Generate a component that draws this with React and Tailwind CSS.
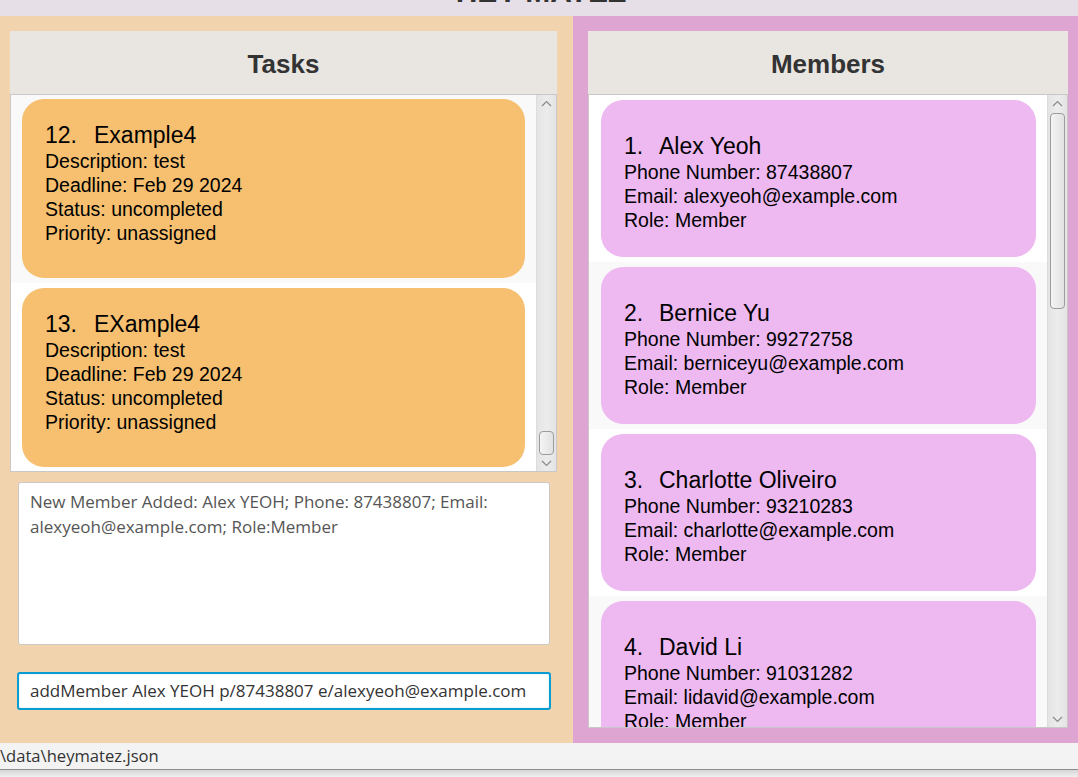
import React from 'react';

const tasks = [
  { id: 12, name: 'Example4', description: 'test', deadline: 'Feb 29 2024', status: 'uncompleted', priority: 'unassigned' },
  { id: 13, name: 'EXample4', description: 'test', deadline: 'Feb 29 2024', status: 'uncompleted', priority: 'unassigned' },
];

const members = [
  { id: 1, name: 'Alex Yeoh', phone: '87438807', email: 'alexyeoh@example.com', role: 'Member' },
  { id: 2, name: 'Bernice Yu', phone: '99272758', email: 'berniceyu@example.com', role: 'Member' },
  { id: 3, name: 'Charlotte Oliveiro', phone: '93210283', email: 'charlotte@example.com', role: 'Member' },
  { id: 4, name: 'David Li', phone: '91031282', email: 'lidavid@example.com', role: 'Member' },
];

function Chevron({ up }) {
  return (
    <svg width="11" height="7" viewBox="0 0 11 7" className="text-[#8a8a8a]">
      <path d={up ? 'M1 6 L5.5 1.5 L10 6' : 'M1 1 L5.5 5.5 L10 1'} fill="none" stroke="currentColor" strokeWidth="1.2" />
    </svg>
  );
}

function ScrollBar({ before, thumb }) {
  return (
    <div className="w-[20px] shrink-0 flex flex-col bg-gradient-to-r from-[#e4e4e4] via-[#ececec] to-[#e4e4e4] border-l border-[#dcdcdc]">
      <div className="h-[16px] flex items-center justify-center">
        <Chevron up />
      </div>
      <div style={{ height: before }} />
      <div
        className="mx-[2px] rounded-[4px] border border-[#9c9c9c] bg-gradient-to-r from-[#f4f4f4] to-[#e2e2e2]"
        style={{ height: thumb }}
      />
      <div className="flex-1" />
      <div className="h-[16px] flex items-center justify-center">
        <Chevron />
      </div>
    </div>
  );
}

function TaskCard({ task }) {
  return (
    <div className="h-[179px] rounded-[22px] bg-[#f6c070] pl-[23px] pt-[23px] text-black font-['Liberation_Sans',Arial,sans-serif]">
      <div className="flex text-[23px] leading-[27px]">
        <span className="w-[49px]">{task.id}.</span>
        <span>{task.name}</span>
      </div>
      <div className="text-[19.5px] leading-[24px]">
        <div>Description: {task.description}</div>
        <div>Deadline: {task.deadline}</div>
        <div>Status: {task.status}</div>
        <div>Priority: {task.priority}</div>
      </div>
    </div>
  );
}

function MemberCard({ member }) {
  return (
    <div className="h-[157px] rounded-[22px] bg-[#edb9f0] pl-[23px] pt-[33px] text-black font-['Liberation_Sans',Arial,sans-serif]">
      <div className="flex text-[23px] leading-[27px]">
        <span className="w-[35px]">{member.id}.</span>
        <span>{member.name}</span>
      </div>
      <div className="text-[19.5px] leading-[24px]">
        <div>Phone Number: {member.phone}</div>
        <div>Email: {member.email}</div>
        <div>Role: {member.role}</div>
      </div>
    </div>
  );
}

function Header({ title }) {
  return (
    <div className="h-[63px] bg-[#e9e5e1] flex items-center justify-center pt-[3px]">
      <h2 className="text-[26px] font-bold text-[#333333] font-['Liberation_Sans',Arial,sans-serif]">{title}</h2>
    </div>
  );
}

export default function App() {
  return (
    <div className="w-[1078px] h-[777px] overflow-hidden flex flex-col bg-[#f0f0f0]">
      {/* title bar, mostly scrolled out of view */}
      <div className="h-[16px] shrink-0 bg-[#e6dfe8] overflow-hidden flex justify-center">
        <span className="mt-[-23px] ml-[4px] text-[30px] leading-[30px] font-bold text-[#333333] font-['Liberation_Sans',Arial,sans-serif]">
          HEY MATEZ
        </span>
      </div>

      <div className="h-[727px] shrink-0 flex">
        {/* Tasks side */}
        <div className="w-[573px] shrink-0 bg-[#f1d4ae] pl-[10px] pr-[16px] pt-[15px] flex flex-col">
          <Header title="Tasks" />
          <div className="h-[378px] border border-[#c8c8c8] flex bg-white">
            <div className="flex-1 overflow-hidden">
              <div className="-mt-px">
                {tasks.map((task, i) => (
                  <div key={task.id} className={`px-[11px] py-[5px] ${i % 2 === 0 ? 'bg-[#f9f9f9]' : 'bg-white'}`}>
                    <TaskCard task={task} />
                  </div>
                ))}
              </div>
            </div>
            <ScrollBar before={320} thumb={24} />
          </div>

          <div className="mt-[10px] ml-[8px] mr-[7px] h-[163px] bg-white border border-[#c9c9c9] rounded-[3px] px-[11px] pt-[6px] text-[17px] leading-[25px] text-[#555555] font-['Open_Sans','Noto_Sans',sans-serif]">
            <div className="whitespace-nowrap">New Member Added: Alex YEOH; Phone: 87438807; Email:</div>
            <div className="whitespace-nowrap">alexyeoh@example.com; Role:Member</div>
          </div>

          <div className="mt-[27px] ml-[7px] mr-[6px] h-[38px] bg-white border-2 border-[#0a9bd0] rounded-[3px] shadow-[inset_0_0_2px_#bfe6f5] flex items-center px-[11px]">
            <span className="whitespace-nowrap text-[17px] text-[#333333] font-['Open_Sans','Noto_Sans',sans-serif]">
              addMember Alex YEOH p/87438807 e/alexyeoh@example.com
            </span>
          </div>
        </div>

        {/* Members side */}
        <div className="flex-1 bg-[#dea5d2] pl-[15px] pr-[10px] pt-[15px] flex flex-col">
          <Header title="Members" />
          <div className="h-[634px] border border-[#c8c8c8] flex bg-white">
            <div className="flex-1 overflow-hidden">
              {members.map((member, i) => (
                <div key={member.id} className={`pl-[12px] pr-[11px] py-[5px] ${i % 2 === 0 ? 'bg-white' : 'bg-[#f9f9f9]'}`}>
                  <MemberCard member={member} />
                </div>
              ))}
            </div>
            <ScrollBar before={2} thumb={196} />
          </div>
        </div>
      </div>

      {/* status bar */}
      <div className="h-[26px] shrink-0 bg-[#f3f3f3] flex items-center">
        <span className="text-[16.6px] text-[#333333] font-['Open_Sans','Noto_Sans',sans-serif]">\data\heymatez.json</span>
      </div>
      <div className="h-px shrink-0 bg-[#8c8c8c]" />
      <div className="flex-1 bg-gradient-to-b from-[#d6d6d6] to-[#f0f0f0]" />
    </div>
  );
}
